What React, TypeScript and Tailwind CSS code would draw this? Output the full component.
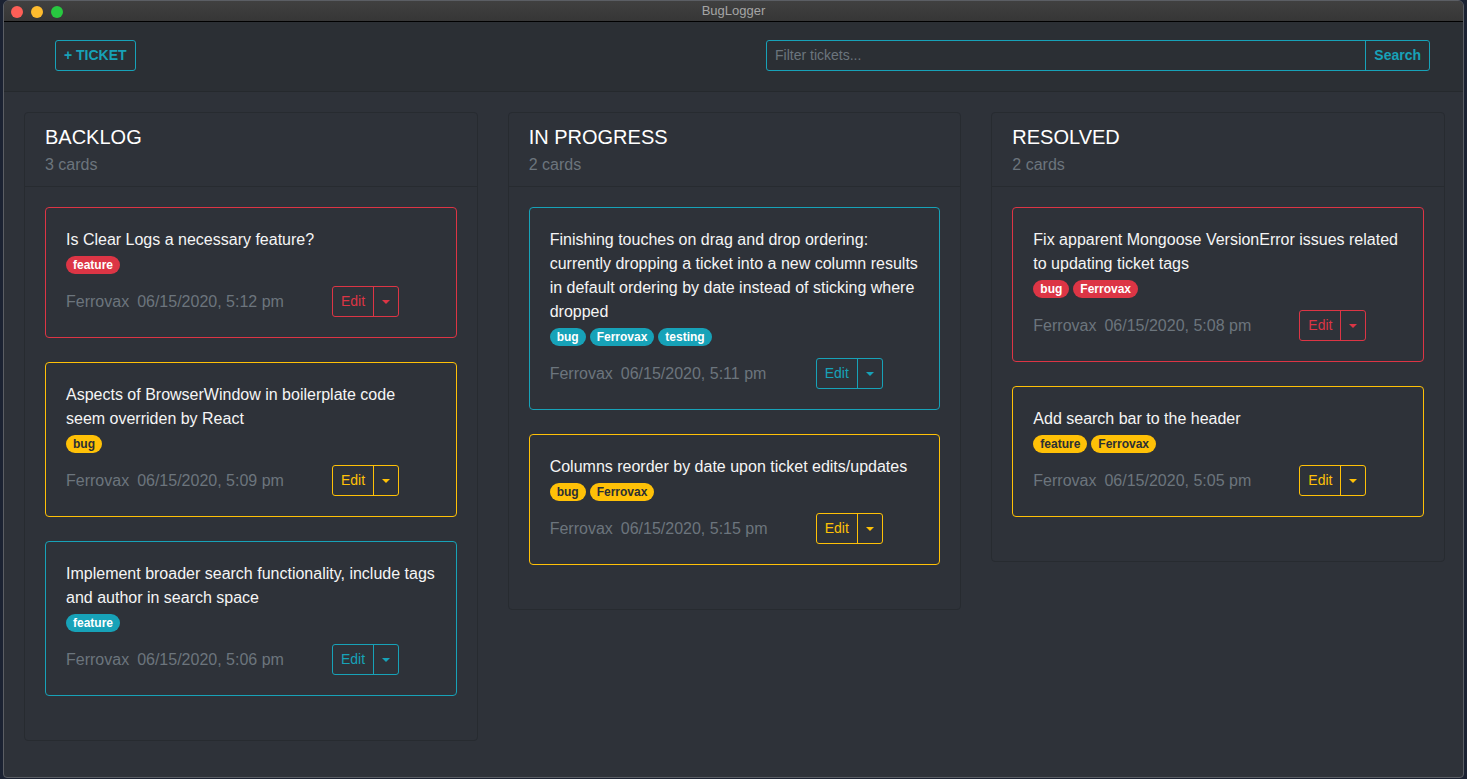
import React from "react";

type Tone = "red" | "yellow" | "teal";

const tone: Record<Tone, { border: string; text: string; badge: string; caret: string; divider: string }> = {
  red: {
    border: "border-[#dc3545]",
    text: "text-[#dc3545]",
    badge: "bg-[#dc3545] text-white",
    caret: "border-t-[#dc3545]",
    divider: "border-l-[#dc3545]",
  },
  yellow: {
    border: "border-[#ffc107]",
    text: "text-[#ffc107]",
    badge: "bg-[#ffc107] text-[#2b2f34]",
    caret: "border-t-[#ffc107]",
    divider: "border-l-[#ffc107]",
  },
  teal: {
    border: "border-[#17a2b8]",
    text: "text-[#17a2b8]",
    badge: "bg-[#17a2b8] text-white",
    caret: "border-t-[#17a2b8]",
    divider: "border-l-[#17a2b8]",
  },
};

type Ticket = { title: string; tags: string[]; date: string; tone: Tone };

const columns: { name: string; tickets: Ticket[] }[] = [
  {
    name: "BACKLOG",
    tickets: [
      { title: "Is Clear Logs a necessary feature?", tags: ["feature"], date: "06/15/2020, 5:12 pm", tone: "red" },
      {
        title: "Aspects of BrowserWindow in boilerplate code seem overriden by React",
        tags: ["bug"],
        date: "06/15/2020, 5:09 pm",
        tone: "yellow",
      },
      {
        title: "Implement broader search functionality, include tags and author in search space",
        tags: ["feature"],
        date: "06/15/2020, 5:06 pm",
        tone: "teal",
      },
    ],
  },
  {
    name: "IN PROGRESS",
    tickets: [
      {
        title:
          "Finishing touches on drag and drop ordering: currently dropping a ticket into a new column results in default ordering by date instead of sticking where dropped",
        tags: ["bug", "Ferrovax", "testing"],
        date: "06/15/2020, 5:11 pm",
        tone: "teal",
      },
      {
        title: "Columns reorder by date upon ticket edits/updates",
        tags: ["bug", "Ferrovax"],
        date: "06/15/2020, 5:15 pm",
        tone: "yellow",
      },
    ],
  },
  {
    name: "RESOLVED",
    tickets: [
      {
        title: "Fix apparent Mongoose VersionError issues related to updating ticket tags",
        tags: ["bug", "Ferrovax"],
        date: "06/15/2020, 5:08 pm",
        tone: "red",
      },
      {
        title: "Add search bar to the header",
        tags: ["feature", "Ferrovax"],
        date: "06/15/2020, 5:05 pm",
        tone: "yellow",
      },
    ],
  },
];

function Card({ t }: { t: Ticket }) {
  const c = tone[t.tone];
  return (
    <div className={`mb-6 rounded-[4px] border ${c.border} bg-[#2e3239] py-5 pl-5 pr-[19.5px]`}>
      <div className="text-[16px] leading-[24px] text-[#f5f5f5]">{t.title}</div>
      <div className="flex h-[24px] items-center gap-[4px] pt-[2px]">
        {t.tags.map((tag) => (
          <span
            key={tag}
            className={`inline-block rounded-full px-[7px] pt-[3px] pb-[3px] text-[12px] leading-[12px] font-bold ${c.badge}`}
          >
            {tag}
          </span>
        ))}
      </div>
      <div className="mt-[10px] flex items-center">
        <div className="w-[266px] text-[16px] leading-[24px] text-[#6c757d]">
          <span>Ferrovax</span>
          <span className="ml-2">{t.date}</span>
        </div>
        <div className={`flex h-[31px] rounded-[3px] border ${c.border}`}>
          <div className={`flex items-center px-2 text-[14px] ${c.text}`}>Edit</div>
          <div className={`flex w-[25px] items-center justify-center border-l ${c.divider}`}>
            <span className={`h-0 w-0 border-x-[4px] border-t-[4px] border-x-transparent ${c.caret}`} />
          </div>
        </div>
      </div>
    </div>
  );
}

export default function App() {
  return (
    <div
      className="flex h-[779px] w-[1467px] bg-[#1b2232]"
      style={{ fontFamily: '"Liberation Sans", Arial, sans-serif' }}
    >
      <div className="ml-[3px] flex h-[778px] w-[1461px] flex-col overflow-hidden rounded-t-[6px] rounded-b-[4px] border border-[#5b5e64] bg-[#2e3239]">
        {/* title bar */}
        <div className="relative flex h-[21px] shrink-0 items-center justify-center border-b border-b-black bg-gradient-to-b from-[#404040] to-[#363636]">
          <div className="absolute left-[7px] top-[5px] flex gap-[8px]">
            <span className="h-[12px] w-[12px] rounded-full bg-[#fe5f57]" />
            <span className="h-[12px] w-[12px] rounded-full bg-[#febc2e]" />
            <span className="h-[12px] w-[12px] rounded-full bg-[#28c840]" />
          </div>
          <span className="text-[13px] text-[#a5a5a5]">BugLogger</span>
        </div>

        {/* header */}
        <div className="flex shrink-0 items-center justify-between border-b border-b-[#25292d] bg-[#2b2f34] pt-[18px] pb-[20px] pl-[51px] pr-[33px]">
          <button className="h-[31px] rounded-[3px] border border-[#17a2b8] px-2 text-[14px] font-bold text-[#17a2b8]">
            + TICKET
          </button>
          <div className="flex h-[31px] w-[664px] rounded-[3px] border border-[#17a2b8]">
            <div className="flex flex-1 items-center px-2 text-[14px] text-[#6c757d]">Filter tickets...</div>
            <div className="flex items-center border-l border-l-[#17a2b8] px-2 text-[14px] font-bold text-[#17a2b8]">
              Search
            </div>
          </div>
        </div>

        {/* board */}
        <div className="grid grid-cols-3 items-start gap-[30px] pt-5 pl-[20px] pr-[18px]">
          {columns.map((col) => (
            <div key={col.name} className="rounded-[4px] border border-[#272b30] bg-[#2e3239]">
              <div className="border-b border-b-[#272b30] px-5 pt-3 pb-[9px]">
                <div className="text-[20px] leading-[24px] text-white">{col.name}</div>
                <div className="mt-[4px] text-[16px] leading-[24px] text-[#6c757d]">
                  {col.tickets.length} cards
                </div>
              </div>
              <div className="px-5 pt-5 pb-5">
                {col.tickets.map((t, i) => (
                  <Card key={i} t={t} />
                ))}
              </div>
            </div>
          ))}
        </div>
      </div>
    </div>
  );
}
